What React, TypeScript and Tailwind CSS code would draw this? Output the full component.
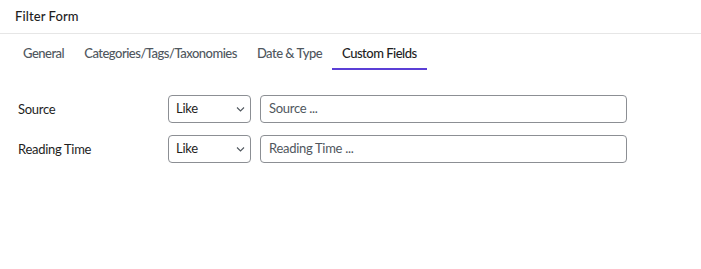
const tabs = ["General", "Categories/Tags/Taxonomies", "Date & Type", "Custom Fields"];

const fields = [
  { label: "Source", placeholder: "Source ..." },
  { label: "Reading Time", placeholder: "Reading Time ..." },
];

function Chevron() {
  return (
    <svg width="9" height="6" viewBox="0 0 9 6" fill="none" className="text-[#50575e]">
      <path d="M1 1.5l3.5 3.5 3.5-3.5" stroke="currentColor" strokeWidth="1.1" />
    </svg>
  );
}

export default function App() {
  return (
    <div
      className="w-[701px] h-[269px] bg-white text-[13px] text-[#1e1e1e]"
      style={{ fontFamily: 'Lato, "Noto Sans", sans-serif' }}
    >
      <div className="h-[34px] border-b border-[#e6e6e6] px-[15px] pt-[6px] leading-[20px] font-medium tracking-[0.1px]">
        Filter Form
      </div>
      <div className="flex px-[13px] pt-[8px]">
        {tabs.map((tab, i) => {
          const active = i === tabs.length - 1;
          return (
            <div
              key={tab}
              className={
                active
                  ? "px-[10px] h-[28px] leading-[22px] border-b-2 border-[#5b3fd6] font-medium tracking-[-0.5px] text-[#1e1e1e]"
                  : "px-[10px] h-[28px] leading-[22px] text-[#50575e] font-medium tracking-[-0.5px]"
              }
            >
              {tab}
            </div>
          );
        })}
      </div>
      <div className="flex flex-col gap-[12px] pt-[25px] px-[18px]">
        {fields.map((f) => (
          <div key={f.label} className="flex items-center tracking-[-0.3px]">
            <div className="w-[150px] pt-[2px] text-[#1e1e1e]">{f.label}</div>
            <div className="flex items-center justify-between w-[83px] h-[28px] border border-[#8c8f94] rounded-[4px] pl-[7px] pr-[5px]">
              <span>Like</span>
              <Chevron />
            </div>
            <div className="ml-[9px] flex items-center w-[367px] h-[28px] border border-[#8c8f94] rounded-[4px] px-[8px] text-[#50575e]">
              {f.placeholder}
            </div>
          </div>
        ))}
      </div>
    </div>
  );
}
